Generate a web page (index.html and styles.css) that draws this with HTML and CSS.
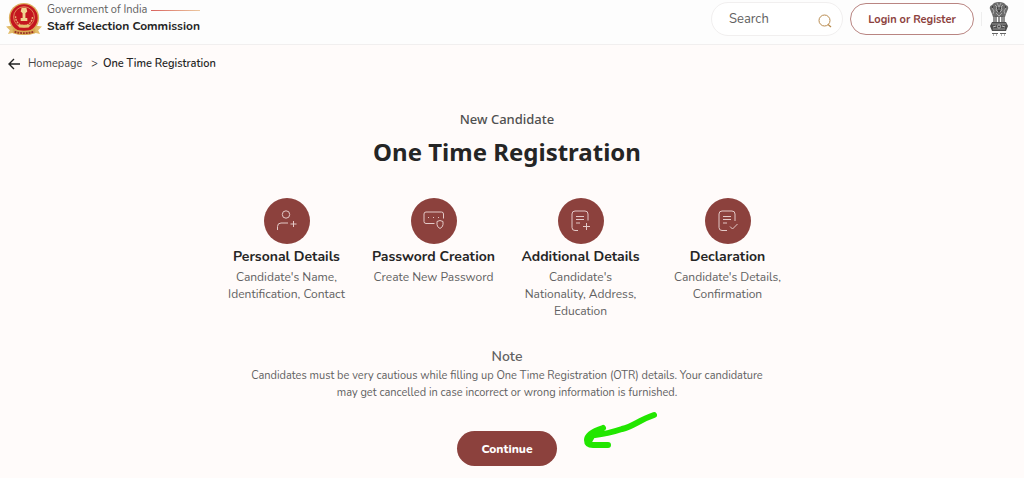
FILE: index.html
```html
<!DOCTYPE html>
<html lang="en">
<head>
  <meta charset="UTF-8" />
  <title>One Time Registration - Staff Selection Commission</title>
  <meta name="viewport" content="width=device-width, initial-scale=1.0" />
  <link rel="stylesheet" href="styles.css">
</head>
<body>
  <header class="header">
    <a class="brand" href="#">
      <svg class="brand-logo" viewBox="0 0 40 36" aria-hidden="true">
        <path d="M1 26l7-1 3 7-8 2 2-4z M39 26l-7-1-3 7 8 2-2-4z" fill="#e3bd6a" />
        <circle cx="20" cy="17" r="16" fill="#dcae5c" />
        <circle cx="20" cy="17" r="14.500" fill="#c4161f" />
        <circle cx="20" cy="16" r="11" fill="none" stroke="#e08a5c" stroke-width="1" />
        <path d="M11 15c0 6 4 10 9 10s9-4 9-10" fill="none" stroke="#e9b070" stroke-width="1.500" stroke-dasharray="2 1" />
        <path d="M17.500 6h5l1 4-2 2v5h2v3h-7v-3h2v-5l-2-2z" fill="#f0d48f" />
        <path d="M13 24h14l-2 3H15z" fill="#e6c272" />
        <path d="M8 28q12 5 24 0v5q-12 4-24 0z" fill="#d8a851" />
        <path d="M10 31.500q10 3 20 0" fill="none" stroke="#9c3427" stroke-width="2" stroke-dasharray="2 1" />
      </svg>
      <span class="brand-text">
        <span class="brand-top">Government of India <span class="brand-line"></span></span>
        <span class="brand-name">Staff Selection Commission</span>
      </span>
    </a>
    <div class="tools">
      <form class="search">
        <input class="search-input" type="text" placeholder="Search" aria-label="Search" />
        <button class="search-button" type="button" aria-label="Search">
          <svg viewBox="0 0 14 14" width="14" height="14">
            <circle cx="6.500" cy="6.500" r="5.500" fill="none" stroke="#b98b4f" />
            <path d="M10 10.500l3 2.500" fill="none" stroke="#b98b4f" stroke-width="1.300" />
          </svg>
        </button>
      </form>
      <button class="login" type="button">Login or Register</button>
      <span class="divider"></span>
      <svg class="emblem" viewBox="0 0 20 34" aria-hidden="true">
        <path d="M5 1q5-2 10 0l2 2q3 1 2 4l-2 5-1 3H4l-1-3-2-5q-1-3 2-4z" fill="#6b6b6b" />
        <path d="M6 3l2 2-1 3 2 2M14 3l-2 2 1 3-2 2M3 6l2 3-1 3M17 6l-2 3 1 3M8 1l2 4 2-4M7 11l3 3 3-3" fill="none" stroke="#c4c4c4" stroke-width=".7" />
        <path d="M8 6h1M11 6h1M3 5h1M16 5h1M9 9h2" stroke="#151515" />
        <path d="M5 15v6M7 14v7M10 15v5M13 14v7M15 15v6" stroke="#555" stroke-width="1.300" />
        <path d="M3 20h14l2 4-2 5H3l-2-5z" fill="#4d4d4d" />
        <path d="M3 22h14M4 27h12" stroke="#aaa" stroke-width=".8" />
        <circle cx="10" cy="24.500" r="1.600" fill="none" stroke="#ddd" stroke-width=".7" />
        <path d="M4 25l3-1M13 24l3 1" stroke="#ddd" stroke-width=".8" />
        <path d="M3 31.500h6M11 31.500h6M4 33h1M7 33h1M12 33h1M15 33h1" stroke="#666" stroke-width="1.100" />
      </svg>
    </div>
  </header>

  <nav class="breadcrumb" aria-label="Breadcrumb">
    <a class="back" href="#" aria-label="Back">
      <svg viewBox="0 0 12 12" width="12" height="12">
        <path d="M12 6H1M6 1L1 6l5 5" fill="none" stroke="#222" stroke-width="1.400" />
      </svg>
    </a>
    <a class="crumb" href="#">Homepage</a>
    <span class="crumb-sep">&gt;</span>
    <span class="crumb-current">One Time Registration</span>
  </nav>

  <main class="content">
    <p class="subtitle">New Candidate</p>
    <h1 class="title">One Time Registration</h1>

    <div class="steps">
      <section class="step">
        <div class="step-icon">
          <svg viewBox="0 0 46 46">
            <circle cx="22" cy="16.500" r="3.700" />
            <path d="M13.500 32v-3.500q0-3.500 3.500-3.500h7M29.500 23v6M26.500 26h6" />
          </svg>
        </div>
        <h2 class="step-title">Personal Details</h2>
        <p class="step-text">Candidate's Name, Identification, Contact</p>
      </section>
      <section class="step">
        <div class="step-icon">
          <svg viewBox="0 0 46 46">
            <path d="M23.500 25.500H15q-2 0-2-2v-7.500q0-2 2-2h15.500q2 0 2 2v4.500" />
            <path d="M17 19.500h1M22 19.500h1M27 19.500h1" />
            <path d="M29 22.500l3 1v3q0 2.500-3 4-3-1.500-3-4v-3z" />
          </svg>
        </div>
        <h2 class="step-title">Password Creation</h2>
        <p class="step-text">Create New Password</p>
      </section>
      <section class="step">
        <div class="step-icon">
          <svg viewBox="0 0 46 46">
            <path d="M20 32.500h-3q-3 0-3-3V16q0-3 3-3h10q3 0 3 3v6.500M18 18.500h8M18 21.500h8M18 25h4M28.500 25v7M25 28.500h7" />
          </svg>
        </div>
        <h2 class="step-title">Additional Details</h2>
        <p class="step-text">Candidate's Nationality, Address, Education</p>
      </section>
      <section class="step">
        <div class="step-icon">
          <svg viewBox="0 0 46 46">
            <path d="M22 32.500h-5q-3 0-3-3V16q0-3 3-3h10q3 0 3 3v7M18 18.500h8M18 21.500h8M18 25h4M25 28.500l2.500 2.500 5-5" />
          </svg>
        </div>
        <h2 class="step-title">Declaration</h2>
        <p class="step-text">Candidate's Details, Confirmation</p>
      </section>
    </div>

    <section class="note">
      <h2 class="note-title">Note</h2>
      <p class="note-text">Candidates must be very cautious while filling up One Time Registration (OTR) details. Your candidature may get cancelled in case incorrect or wrong information is furnished.</p>
    </section>

    <div class="action">
      <button class="continue" type="button">Continue</button>
      <svg class="pointer" viewBox="0 0 74 38" aria-hidden="true">
        <path d="M71 4C56 9 51 15 39 18C30 21 24 23 12 24M20 17Q4 22 4 29Q4 34 10 34H25M20 17Q8 24 7 29" />
      </svg>
    </div>
  </main>
</body>
</html>
```
FILE: styles.css
```css
:root {
  --primary: #8c413d;
  --page: #fffbfa;
  --dark: #252525;
  --muted: #616161;
}

* {
  box-sizing: border-box;
}

body {
  font-family: Nunito, Lato, sans-serif;
  background: var(--page);
  color: var(--dark);
  margin: 0;
}

h1, h2, p {
  margin: 0;
}

a {
  color: inherit;
  text-decoration: none;
}

button, input {
  font-family: inherit;
}

button {
  cursor: pointer;
}

.header {
  display: flex;
  justify-content: space-between;
  align-items: flex-start;
  background: #fdfdfd;
  border-bottom: 1px solid #f1efef;
  height: 45px;
  padding: 2px 15px 0 4px;
}

.brand {
  display: flex;
  gap: 3px;
}

.brand-logo {
  width: 40px;
  height: 34px;
}

.brand-text {
  display: flex;
  flex-direction: column;
}

.brand-top {
  display: flex;
  align-items: center;
  gap: 4px;
  font-size: 11px;
  line-height: 16px;
  color: var(--muted);
}

.brand-line {
  width: 49px;
  height: 1px;
  background: linear-gradient(to right, #d9635f, #ecc9a0);
}

.brand-name {
  font-size: 12px;
  line-height: 16px;
  font-weight: 700;
}

.tools {
  display: flex;
  align-items: center;
}

.search {
  display: flex;
  align-items: center;
  width: 132px;
  height: 34px;
  margin-right: 7px;
  padding: 0 10px 0 17px;
  background: white;
  border: 1px solid #f1efef;
  border-radius: 17px;
}

.search-input {
  flex: 1;
  min-width: 0;
  padding: 0;
  border: none;
  background: none;
  font-size: 13px;
  line-height: 16px;
}

.search-input::placeholder {
  color: var(--muted);
}

.search-button {
  display: flex;
  padding: 4px 0 0;
  border: none;
  background: none;
}

.login {
  width: 124px;
  height: 32px;
  padding: 0;
  border: 1px solid #b98582;
  border-radius: 16px;
  background: white;
  color: var(--primary);
  font-size: 11px;
  font-weight: 700;
}

.divider {
  width: 1px;
  height: 14px;
  margin: 0 7px;
  background: #eeeeee;
}

.emblem {
  width: 20px;
  height: 34px;
}

.breadcrumb {
  display: flex;
  align-items: center;
  padding: 9px 8px 0;
  font-size: 11px;
  line-height: 20px;
}

.crumb {
  color: #444444;
}

.back {
  display: flex;
  margin-right: 8px;
}

.crumb-sep {
  margin: 0 5px 0 9px;
}

.crumb-current {
  font-weight: 600;
}

.content {
  display: flex;
  flex-direction: column;
  align-items: center;
  padding: 35px 10px 12px 0;
  text-align: center;
}

.subtitle {
  font-family: "Noto Sans", sans-serif;
  font-size: 13px;
  font-weight: 500;
  line-height: 20px;
  color: #505050;
}

.title {
  margin-top: 5px;
  font-family: "Noto Sans", sans-serif;
  font-size: 24px;
  line-height: 36px;
}

.steps {
  display: grid;
  grid-template-columns: repeat(4, 127px);
  gap: 20px;
  margin-top: 28px;
}

.step {
  display: flex;
  flex-direction: column;
  align-items: center;
}

.step-icon {
  width: 46px;
  height: 46px;
  border-radius: 50%;
  background: var(--primary);
}

.step-icon svg {
  display: block;
  fill: none;
  stroke: #e3c9c7;
  stroke-width: 1;
}

.step-title {
  margin-top: 3px;
  font-size: 14px;
  line-height: 20px;
  white-space: nowrap;
}

.step-text {
  margin-top: 2px;
  font-size: 12px;
  line-height: 17px;
  color: var(--muted);
}

.note {
  max-width: 520px;
  margin-top: 27px;
  color: var(--muted);
}

.note-title {
  font-size: 14px;
  font-weight: 600;
  line-height: 20px;
}

.note-text {
  font-size: 11px;
  line-height: 17px;
}

.action {
  position: relative;
  margin-top: 30px;
}

.continue {
  width: 100px;
  height: 35px;
  padding: 0;
  border: none;
  border-radius: 18px;
  background: var(--primary);
  color: white;
  font-size: 12px;
  font-weight: 800;
}

/* Hand-drawn arrow beside the button */
.pointer {
  position: absolute;
  top: -20px;
  left: 126px;
  width: 74px;
  height: 38px;
  fill: none;
  stroke: #22e600;
  stroke-width: 6;
  stroke-linecap: round;
  stroke-linejoin: round;
}
```
